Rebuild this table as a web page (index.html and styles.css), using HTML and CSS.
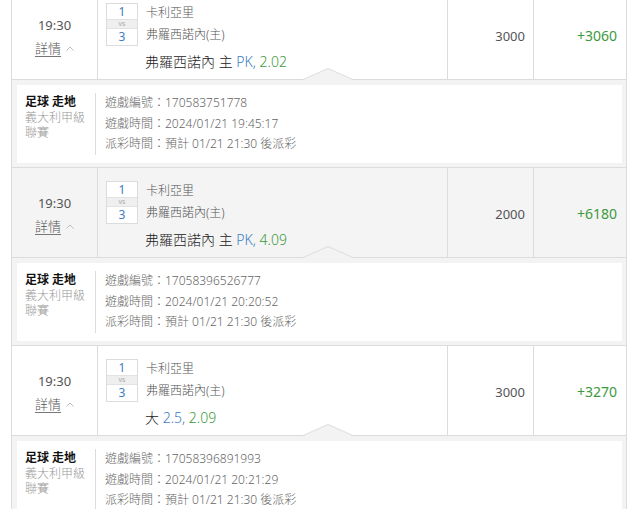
FILE: index.html
```html
<!DOCTYPE html>
<html lang="zh-Hant">
<head>
<meta charset="utf-8">
<link rel="stylesheet" href="styles.css">
</head>
<body>
<div class="list">
  <div class="row">
    <div class="c-time"><div class="time">19:30</div><div class="more"><a class="link">詳情</a><svg class="chev" width="8" height="5" viewBox="0 0 8 5"><polyline points="0.5,4.5 4,1 7.5,4.5" fill="none" stroke="#bbb" stroke-width="1"/></svg></div></div>
    <div class="c-bet">
      <div class="match">
        <div class="score"><div class="s">1</div><div class="vs">vs</div><div class="s">3</div></div>
        <div class="teams"><div>卡利亞里</div><div>弗羅西諾內(主)</div></div>
      </div>
      <div class="pick">弗羅西諾內 主 <span class="blue">PK,</span> <span class="green">2.02</span></div>
    </div>
    <div class="c-amt">3000</div>
    <div class="c-win">+3060</div>
  </div>
  <div class="detail">
    <svg class="notch" width="50" height="12" viewBox="0 0 50 12"><polygon points="0,12 25,0.5 50,12" fill="#f3f3f3"/><polyline points="0,11.5 25,0.5 50,11.5" fill="none" stroke="#dcdcdc" stroke-width="1"/></svg>
    <div class="box">
      <div class="cat"><b>足球 走地</b><span>義大利甲級聯賽</span></div>
      <div class="info"><div>遊戲編號：170583751778</div><div>遊戲時間：2024/01/21 19:45:17</div><div>派彩時間：預計 01/21 21:30 後派彩</div></div>
    </div>
  </div>

  <div class="row hl">
    <div class="c-time"><div class="time">19:30</div><div class="more"><a class="link">詳情</a><svg class="chev" width="8" height="5" viewBox="0 0 8 5"><polyline points="0.5,4.5 4,1 7.5,4.5" fill="none" stroke="#bbb" stroke-width="1"/></svg></div></div>
    <div class="c-bet">
      <div class="match">
        <div class="score"><div class="s">1</div><div class="vs">vs</div><div class="s">3</div></div>
        <div class="teams"><div>卡利亞里</div><div>弗羅西諾內(主)</div></div>
      </div>
      <div class="pick">弗羅西諾內 主 <span class="blue">PK,</span> <span class="green">4.09</span></div>
    </div>
    <div class="c-amt">2000</div>
    <div class="c-win">+6180</div>
  </div>
  <div class="detail">
    <svg class="notch" width="50" height="12" viewBox="0 0 50 12"><polygon points="0,12 25,0.5 50,12" fill="#f3f3f3"/><polyline points="0,11.5 25,0.5 50,11.5" fill="none" stroke="#dcdcdc" stroke-width="1"/></svg>
    <div class="box">
      <div class="cat"><b>足球 走地</b><span>義大利甲級聯賽</span></div>
      <div class="info"><div>遊戲編號：17058396526777</div><div>遊戲時間：2024/01/21 20:20:52</div><div>派彩時間：預計 01/21 21:30 後派彩</div></div>
    </div>
  </div>

  <div class="row">
    <div class="c-time"><div class="time">19:30</div><div class="more"><a class="link">詳情</a><svg class="chev" width="8" height="5" viewBox="0 0 8 5"><polyline points="0.5,4.5 4,1 7.5,4.5" fill="none" stroke="#bbb" stroke-width="1"/></svg></div></div>
    <div class="c-bet">
      <div class="match">
        <div class="score"><div class="s">1</div><div class="vs">vs</div><div class="s">3</div></div>
        <div class="teams"><div>卡利亞里</div><div>弗羅西諾內(主)</div></div>
      </div>
      <div class="pick">大 <span class="blue">2.5,</span> <span class="green">2.09</span></div>
    </div>
    <div class="c-amt">3000</div>
    <div class="c-win">+3270</div>
  </div>
  <div class="detail">
    <svg class="notch" width="50" height="12" viewBox="0 0 50 12"><polygon points="0,12 25,0.5 50,12" fill="#f3f3f3"/><polyline points="0,11.5 25,0.5 50,11.5" fill="none" stroke="#dcdcdc" stroke-width="1"/></svg>
    <div class="box">
      <div class="cat"><b>足球 走地</b><span>義大利甲級聯賽</span></div>
      <div class="info"><div>遊戲編號：17058396891993</div><div>遊戲時間：2024/01/21 20:21:29</div><div>派彩時間：預計 01/21 21:30 後派彩</div></div>
    </div>
  </div>
</div>
</body>
</html>
```

FILE: styles.css
```css
* { box-sizing: border-box; }
html, body { margin: 0; padding: 0; background: #fff; }
body {
  font-family: "Noto Sans", "Noto Sans CJK TC", sans-serif;
  color: #555;
  overflow: hidden;
}
.list {
  margin: -10px 0 0 11px;
  width: 616px;
  border-left: 1px solid #dcdcdc;
  border-right: 1px solid #dcdcdc;
}
.row {
  display: grid;
  grid-template-columns: 86px 350px 86px 92px;
  height: 90px;
  border-bottom: 1px solid #dcdcdc;
  background: #fff;
}
.row.hl { background: #f4f4f4; }
.c-time, .c-bet, .c-amt { border-right: 1px solid #dcdcdc; }
.c-time {
  display: flex;
  flex-direction: column;
  align-items: center;
  justify-content: center;
  padding-top: 4px;
}
.time { font-size: 13px; line-height: 23px; color: #555; }
.more { display: flex; align-items: center; line-height: 23px; }
.link {
  font-size: 13px;
  color: #555;
  text-decoration: underline;
  text-underline-offset: 3px;
  text-decoration-color: #777;
  font-weight: 300;
}
.chev { margin-left: 5px; margin-top: 1px; }
.c-bet { padding: 13px 0 0 8px; }
.match { display: flex; gap: 8px; }
.score {
  width: 32px;
  border: 1px solid #dcdcdc;
  text-align: center;
  background: #fff;
}
.s { height: 15px; font-size: 12px; line-height: 15px; color: #3d7ebf; }
.vs {
  height: 10px;
  font-size: 7px;
  line-height: 8px;
  color: #aaa;
  background: #efefef;
  border-top: 1px solid #e2e2e2;
  border-bottom: 1px solid #e2e2e2;
}
.teams { font-size: 12px; line-height: 22px; margin-top: -1px; color: #555; font-weight: 300; }
.pick {
  margin: 6px 0 0 39px;
  font-size: 14px;
  line-height: 20px;
  color: #222;
  font-weight: 300;
}
.blue { color: #3d7ebf; }
.green { color: #3c9a3c; }
.c-amt, .c-win {
  display: flex;
  align-items: center;
  justify-content: flex-end;
  padding-top: 2px;
}
.c-amt { font-size: 13px; color: #555; padding-right: 8px; }
.c-win { font-size: 14px; color: #3c9a3c; padding-right: 9px; }
.detail {
  position: relative;
  background: #f3f3f3;
  padding: 5px 4px 4px 5px;
  border-bottom: 1px solid #dcdcdc;
}
.notch { position: absolute; top: -12px; left: 291px; display: block; }
.box {
  display: flex;
  height: 78px;
  background: #fff;
  padding: 8px 0 8px 8px;
  font-size: 12px;
}
.cat {
  width: 71px;
  border-right: 1px solid #dcdcdc;
  line-height: 15.5px;
  padding-top: 1px;
}
.cat b { display: block; color: #111; font-weight: bold; }
.cat span { display: block; width: 62px; color: #999; font-weight: 300; }
.info { padding-left: 9px; line-height: 20.5px; color: #666; font-weight: 300; }
```
